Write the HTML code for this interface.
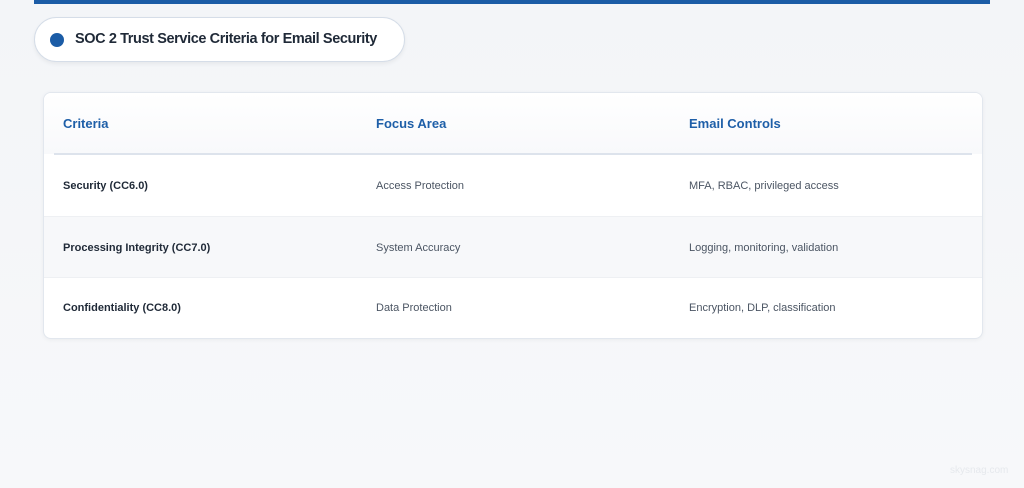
<!DOCTYPE html>
<html><head><meta charset="utf-8"><style>
*{margin:0;padding:0;box-sizing:border-box}
body{width:1024px;height:488px;overflow:hidden;background:linear-gradient(180deg,#f3f5f8,#f7f8fa);font-family:"Liberation Sans",sans-serif;position:relative}
.bar{position:absolute;left:34px;top:0;width:956px;height:4px;background:#1b5ca6}
.pill{position:absolute;left:34px;top:17px;width:371px;height:45px;border-radius:23px;background:#fff;border:1px solid #d5dde8;box-shadow:0 2px 4px rgba(0,0,0,.06)}
.dot{position:absolute;left:15px;top:15px;width:14px;height:14px;border-radius:50%;background:#1b5ca6}
.pill span{position:absolute;left:40px;top:13px;font-size:14.5px;font-weight:bold;color:#1f2937;letter-spacing:-0.4px}
.card{position:absolute;left:43px;top:92px;width:940px;height:247px;border-radius:8px;background:#fff;border:1px solid #e2e7ee;box-shadow:0 1px 4px rgba(0,0,0,.05);overflow:hidden}
.row{position:absolute;left:0;width:100%;}
.c{position:absolute;top:0;}
.hdr{top:0;height:61px;background:linear-gradient(#fff,#f8f9fb)}
.hdr .c{top:23px;font-size:13px;font-weight:bold;color:#1e5fa8}
.line{position:absolute;left:10px;top:60px;width:918px;height:2px;background:#dde3ec}
.r{height:62px}
.r .c{top:25px;font-size:11px;color:#4b5563}
.r .c.b{font-weight:bold;color:#1f2937}
.alt{background:#f7f8fa;border-top:1px solid #eef0f3;border-bottom:1px solid #eef0f3}
.wm{position:absolute;left:950px;top:465px;font-size:10px;color:#e6e9ed}
</style></head><body>
<div class="bar"></div>
<div class="pill"><div class="dot"></div><span>SOC 2 Trust Service Criteria for Email Security</span></div>
<div class="card">
 <div class="row hdr"><div class="c" style="left:19px">Criteria</div><div class="c" style="left:332px">Focus Area</div><div class="c" style="left:645px">Email Controls</div></div>
 <div class="line"></div>
 <div class="row r" style="top:62px"><div class="c b" style="left:19px">Security (CC6.0)</div><div class="c" style="left:332px">Access Protection</div><div class="c" style="left:645px">MFA, RBAC, privileged access</div></div>
 <div class="row r alt" style="top:123px"><div class="c b" style="left:19px">Processing Integrity (CC7.0)</div><div class="c" style="left:332px">System Accuracy</div><div class="c" style="left:645px">Logging, monitoring, validation</div></div>
 <div class="row r" style="top:184px"><div class="c b" style="left:19px">Confidentiality (CC8.0)</div><div class="c" style="left:332px">Data Protection</div><div class="c" style="left:645px">Encryption, DLP, classification</div></div>
</div>
<div class="wm">skysnag.com</div>
</body></html>
